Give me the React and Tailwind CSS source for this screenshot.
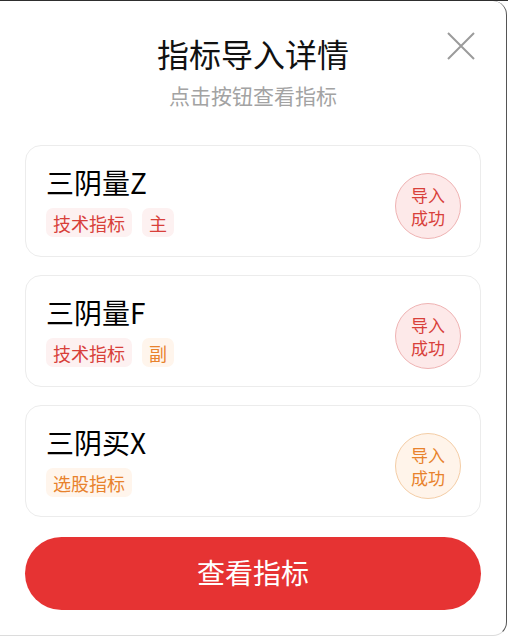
import React from "react";

const items = [
  {
    name: "三阴量Z",
    tags: [
      { label: "技术指标", tone: "red" },
      { label: "主", tone: "red" },
    ],
    tone: "red",
  },
  {
    name: "三阴量F",
    tags: [
      { label: "技术指标", tone: "red" },
      { label: "副", tone: "orange" },
    ],
    tone: "red",
  },
  {
    name: "三阴买X",
    tags: [{ label: "选股指标", tone: "orange" }],
    tone: "orange",
  },
];

const Tag = ({ label, tone }) => (
  <span
    className={`h-[29px] px-[7px] rounded-[7px] flex items-center text-[18px] leading-none ${
      tone === "red"
        ? "bg-[#fdf1f1] text-[#d8403a]"
        : "bg-[#fff5ec] text-[#e8822c]"
    }`}
  >
    {label}
  </span>
);

const Stamp = ({ tone }) => (
  <div
    className={`w-[66px] h-[66px] rounded-full border flex flex-col items-center justify-center text-[17px] leading-[23px] mt-[9px] ${
      tone === "red"
        ? "bg-[#fde9e9] border-[#efb3b3] text-[#d8403a]"
        : "bg-[#fff4ea] border-[#f4cda6] text-[#e8822c]"
    }`}
  >
    <span>导入</span>
    <span>成功</span>
  </div>
);

const IndicatorCard = ({ item }) => (
  <div className="h-[112px] border border-[#ececec] rounded-[16px] pl-[20px] pr-[19px] flex items-center justify-between">
    <div className="flex flex-col gap-[10px] pt-[2px]">
      <div className="text-[28px] leading-[31px] text-black">{item.name}</div>
      <div className="flex gap-[10px]">
        {item.tags.map((t, i) => (
          <Tag key={i} label={t.label} tone={t.tone} />
        ))}
      </div>
    </div>
    <Stamp tone={item.tone} />
  </div>
);

export default function App() {
  return (
    <div
      className="w-[508px] h-[636px] bg-white border-t border-[#2e2e2e] overflow-hidden"
      style={{ fontFamily: '"Noto Sans CJK SC", "Noto Sans", sans-serif' }}
    >
      <div className="relative w-[507px] h-[635px] bg-white rounded-r-[14px] border-r border-b border-r-[#555] border-b-[#dcdcdc] flex flex-col px-[25px]">
        <button className="absolute right-[31px] top-[31px] w-[28px] h-[28px] text-[#9b9b9b]">
          <svg viewBox="0 0 28 28" width="28" height="28" fill="none" stroke="currentColor" strokeWidth="2">
            <path d="M1 1 L27 27 M27 1 L1 27" />
          </svg>
        </button>
        <div className="pt-[31px] text-center text-[32px] leading-[42px] text-[#111]">
          指标导入详情
        </div>
        <div className="mt-[8px] text-center text-[21px] leading-[26px] text-[#a3a3a3]">
          点击按钮查看指标
        </div>
        <div className="mt-[37px] flex flex-col gap-[18px]">
          {items.map((item, i) => (
            <IndicatorCard key={i} item={item} />
          ))}
        </div>
        <button className="mt-[20px] h-[73px] rounded-full bg-[#e63333] text-white text-[28px] leading-none pb-[3px]">
          查看指标
        </button>
      </div>
    </div>
  );
}
